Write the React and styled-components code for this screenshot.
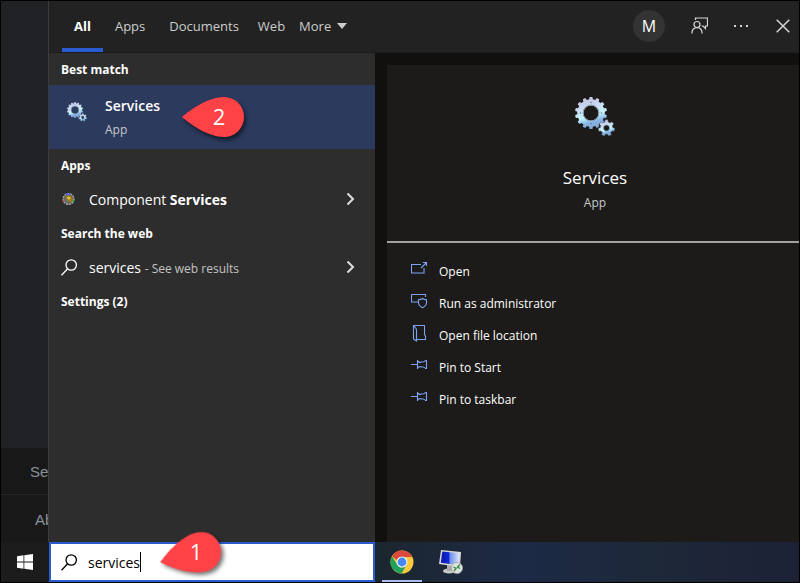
import React, { useState } from 'react';
import styled, { createGlobalStyle, css } from 'styled-components';

const GlobalStyle = createGlobalStyle`
  * {
    box-sizing: border-box;
  }
  body {
    margin: 0;
    background: #000;
    font-family: 'Open Sans', 'Noto Sans', sans-serif;
    color: #fff;
  }
  button, input {
    font: inherit;
    color: inherit;
  }
`;

const Desktop = styled.div`
  min-height: 100vh;
  padding: 1px;
  display: grid;
  grid-template-columns: 48px minmax(0, 1fr);
  grid-template-rows: 1fr 40px;
`;

const Backdrop = styled.aside`
  background: #202124;
  border-right: 1px solid #3c3c3c;
  display: flex;
  flex-direction: column;
  justify-content: flex-end;
  overflow: hidden;
`;

const BackdropLink = styled.a`
  display: flex;
  align-items: center;
  height: 47px;
  padding: 2px 0 0 ${props => props.$indent};
  background: #181818;
  border-bottom: 1px solid #252525;
  color: #8b919a;
  font: 15px/20px 'Liberation Sans', sans-serif;
  text-decoration: none;
  white-space: nowrap;
  &:last-child {
    border-bottom: none;
  }
`;

const SearchWindow = styled.main`
  display: flex;
  flex-direction: column;
  min-width: 0;
`;

const Header = styled.header`
  display: flex;
  justify-content: space-between;
  height: 52px;
  padding-left: 13px;
  background: #222;
  border-bottom: 1px solid #1c1c1c;
`;

const Tabs = styled.nav`
  display: flex;
`;

const Tab = styled.button`
  display: flex;
  align-items: center;
  gap: 6px;
  padding: 0 ${props => (props.$tight ? '7px' : '12px')} 2px;
  background: none;
  border: solid transparent;
  border-width: 4px 0;
  color: #ccc;
  font-size: 13px;
  ${props => props.$active && css`
    border-bottom-color: #2a5bd0;
    color: #fff;
    font-weight: 700;
  `}
`;

const Tools = styled.div`
  display: flex;
  align-items: center;
  gap: 10px;
  padding-bottom: 2px;
`;

const ToolButton = styled.button`
  display: grid;
  place-items: center;
  width: 32px;
  height: 32px;
  padding: 0;
  background: none;
  border: none;
  color: #d6d6d6;
`;

const Avatar = styled.button`
  width: 32px;
  height: 32px;
  margin-right: 8px;
  padding: 0;
  border: none;
  border-radius: 50%;
  background: #333;
  font-size: 16px;
`;

const Body = styled.div`
  flex: 1;
  display: grid;
  grid-template-columns: 326px minmax(0, 1fr);
`;

const Results = styled.section`
  background: #2d2d2d;
`;

const GroupTitle = styled.h2`
  height: 32px;
  margin: 0;
  padding-left: 12px;
  font-size: 12px;
  line-height: 34px;
  font-weight: 700;
`;

const BestMatch = styled.div`
  position: relative;
  background: #2c3a5e;
`;

const BestMatchButton = styled.button`
  display: flex;
  align-items: flex-start;
  gap: 18px;
  width: 100%;
  height: 64px;
  padding: 9px 18px;
  background: none;
  border: none;
  text-align: left;
  svg {
    margin-top: 8px;
  }
`;

const ResultName = styled.span`
  display: block;
  font-size: 14px;
  line-height: 24px;
  font-weight: 600;
`;

const Kind = styled.span`
  display: block;
  font-size: 12px;
  line-height: 24px;
  color: #c6c8cc;
`;

const ResultRow = styled.button`
  display: flex;
  align-items: center;
  gap: 12px;
  width: 100%;
  height: 36px;
  padding: 0 20px 0 12px;
  background: none;
  border: none;
  font-size: 14px;
  text-align: left;
  small {
    font-size: 12px;
    color: #c4c4c4;
  }
  b {
    font-weight: 700;
  }
`;

const RowLabel = styled.span`
  flex: 1;
`;

const Preview = styled.section`
  display: flex;
  padding: 12px 0 0 12px;
  background: #11100e;
`;

const PreviewCard = styled.div`
  flex: 1;
  background: #1c1b19;
`;

const Hero = styled.div`
  display: flex;
  flex-direction: column;
  align-items: center;
  height: 178px;
  padding: 32px 0 0 4px;
  border-bottom: 2px solid #a3a19f;
`;

const HeroTitle = styled.h1`
  margin: 28px 0 0;
  font-size: 17px;
  line-height: 26px;
  font-weight: 400;
`;

const Actions = styled.ul`
  margin: 0;
  padding: 12px 0 0 24px;
  list-style: none;
`;

const ActionButton = styled.button`
  display: flex;
  align-items: center;
  gap: 11px;
  height: 32px;
  padding: 0;
  background: none;
  border: none;
  font-size: 12px;
  svg {
    color: #7ba2f7;
    margin-bottom: 4px;
  }
`;

const Taskbar = styled.footer`
  grid-column: 1 / -1;
  display: flex;
  background: linear-gradient(90deg, #1c1c1c 48px, #1c262e 374px, #1c2a46 520px, #1d2838 650px, #1c2136 100%);
`;

const StartButton = styled.button`
  display: grid;
  place-items: center;
  width: 48px;
  padding: 0;
  background: none;
  border: none;
`;

const SearchBox = styled.label`
  position: relative;
  display: flex;
  align-items: center;
  width: 326px;
  padding-left: 10px;
  border: 2px solid #2a5bd0;
  background: #fff;
  color: #000;
`;

const SearchInput = styled.input`
  field-sizing: content;
  margin-left: 11px;
  padding: 0;
  border: none;
  outline: none;
  background: none;
  font-size: 14px;
  caret-color: transparent;
`;

const Caret = styled.span`
  width: 1px;
  height: 20px;
  background: #000;
`;

const TaskButton = styled.button`
  display: grid;
  place-items: center;
  width: 40px;
  margin-left: ${props => (props.$open ? '7px' : '9px')};
  padding: 0;
  background: none;
  border: solid transparent;
  border-width: 2px 0;
  border-bottom-color: ${props => (props.$open ? '#a9bdf5' : 'transparent')};
`;

const Marker = styled.span`
  position: absolute;
  left: ${props => props.$left};
  top: ${props => props.$top};
  width: 64px;
  height: 44px;
  pointer-events: none;
  svg {
    position: absolute;
    inset: 0;
    overflow: visible;
    filter: drop-shadow(2px 3px 2px rgba(0, 0, 0, 0.55));
    transform: rotate(${props => props.$tilt || 0}deg);
    transform-origin: 42px 20px;
  }
`;

const MarkerNumber = styled.span`
  position: absolute;
  left: 21px;
  top: 0;
  width: 32px;
  color: #fff;
  font-size: 22px;
  line-height: 38px;
  text-align: center;
`;

function gearPath(cx, cy, outer, root, hole, teeth) {
  const points = [];
  const step = (Math.PI * 2) / teeth;
  for (let i = 0; i < teeth; i++) {
    const a = i * step - Math.PI / 2;
    [[-0.3, root], [-0.2, outer], [0.2, outer], [0.3, root]].forEach(([t, r]) => {
      points.push(`${(cx + r * Math.cos(a + t * step)).toFixed(2)} ${(cy + r * Math.sin(a + t * step)).toFixed(2)}`);
    });
  }
  return `M${points.join('L')}ZM${cx - hole} ${cy}a${hole} ${hole} 0 1 0 ${hole * 2} 0a${hole} ${hole} 0 1 0 ${-hole * 2} 0Z`;
}

function Gears({ size }) {
  const id = `gear-${size}`;
  return (
    <svg width={size} height={size} viewBox="0 0 40 40" aria-hidden="true">
      <defs>
        <linearGradient id={id} x1="0.3" y1="0" x2="0.6" y2="1">
          <stop offset="0.1" stopColor="#c3c9e6" />
          <stop offset="0.35" stopColor="#cbdcf3" />
          <stop offset="0.6" stopColor="#c4f5fd" />
          <stop offset="0.78" stopColor="#86b5e8" />
          <stop offset="1" stopColor="#7fa3cf" />
        </linearGradient>
      </defs>
      <path d={gearPath(16, 16, 16, 13.8, 7.5, 14)} fill={`url(#${id})`} fillRule="evenodd" />
      <circle cx="16" cy="16" r="8" fill="none" stroke="#8d9cab" strokeWidth="1" />
      <g fill="#5c7186">
        <circle cx="16" cy="5.5" r="0.7" />
        <circle cx="26.5" cy="16" r="0.7" />
        <circle cx="16" cy="26.5" r="0.7" />
        <circle cx="5.5" cy="16" r="0.7" />
      </g>
      <path d={gearPath(31.5, 31, 8.3, 6.3, 2.8, 7)} fill={`url(#${id})`} fillRule="evenodd" stroke="#47525f" strokeWidth="0.5" />
    </svg>
  );
}

function ComponentIcon() {
  return (
    <svg width="16" height="16" viewBox="0 0 16 16" aria-hidden="true">
      <circle cx="7.5" cy="8" r="5.500" fill="#686b70" stroke="#a5a8ab" strokeWidth="1.2" strokeDasharray="2 1" />
      <path d="M4 6l4-2 4 3-1 4-4 0z" fill="#96771c" />
      <path d="M7 5l3 2-2 2-2-2z" fill="#e3c33a" />
      <path d="M5 2h2v2H5zM8 2h1v2H8z" fill="#4d55e8" />
      <path d="M11 9h2v2h-2z" fill="#35a447" />
      <path d="M2 9h1v2H2z" fill="#d84b4b" />
    </svg>
  );
}

function SearchIcon() {
  return (
    <svg width="16" height="17" viewBox="0 0 16 17" fill="none" stroke="currentColor" strokeWidth="1.3" aria-hidden="true">
      <circle cx="10.2" cy="6" r="5.2" />
      <path d="M6.600 9.800L.5 16.200" />
    </svg>
  );
}

function Chevron() {
  return (
    <svg width="9" height="14" viewBox="0 0 9 14" fill="none" stroke="#dcdcdc" strokeWidth="2" aria-hidden="true">
      <path d="M1.500 1.500L7 7l-5.500 5.500" />
    </svg>
  );
}

const ACTION_PATHS = {
  open: 'M10 3.500H.5v8.500h12.500V7M10 7L15 2M12 1.500h3.500V5',
  admin: 'M14.500 4V1.500H.5v7.500H7M11.500 5.500c-1.200 1-2.500 1.200-4 1.300v2.700c0 2.300 1.400 4 4 5.200 2.600-1.200 4-2.900 4-5.200V6.800c-1.500-.1-2.800-.3-4-1.300z',
  folder: 'M2.500.5h11v9l1 1.500v3.500H6M2.500.5v13.500l3 2v-11c0-1-.5-1.700-1.200-2.300z',
  pin: 'M0 7.500h6M6.500 3v9M6.500 4c1.500 1.500 3 1.500 4 1h1.500c1.300 0 2-.8 2.500-1.500h1v8h-1c-.5-.8-1.200-1.500-2.500-1.500h-1.500c-1-.5-2.500-.5-4 1',
};

function ActionIcon({ name }) {
  return (
    <svg width="17" height="17" viewBox="0 0 17 17" fill="none" stroke="currentColor" strokeWidth="1.1" aria-hidden="true">
      <path d={ACTION_PATHS[name]} />
    </svg>
  );
}

function Callout({ number, ...place }) {
  return (
    <Marker {...place}>
      <svg width="64" height="44" viewBox="0 0 64 44" aria-hidden="true">
        <path d="M0 20C8 13 26 0 42 0a20 20 0 0 1 0 40C26 40 8 27 0 20z" fill="#ff4245" />
      </svg>
      <MarkerNumber>{number}</MarkerNumber>
    </Marker>
  );
}

function ChromeIcon() {
  return (
    <svg width="24" height="24" viewBox="0 0 24 24" aria-hidden="true">
      <circle cx="12" cy="12" r="11.500" fill="#fbc93d" />
      <path d="M2 6.300A11.500 11.500 0 0 1 22.300 7H12a5.500 5.500 0 0 0-5 3.200L2 6.300z" fill="#dc4a3d" />
      <path d="M2 6.300A11.500 11.500 0 0 0 11.500 23.500l5-8.500a5.500 5.500 0 0 1-9.300-.3z" fill="#1fa25c" />
      <circle cx="12" cy="12" r="5.500" fill="#eef3fb" />
      <circle cx="12" cy="12" r="4.400" fill="#4587f3" />
    </svg>
  );
}

function RemoteIcon() {
  return (
    <svg width="24" height="24" viewBox="0 0 24 24" aria-hidden="true">
      <defs>
        <linearGradient id="screen">
          <stop offset="0" stopColor="#0a18b5" />
          <stop offset="0.42" stopColor="#1028cf" />
          <stop offset="0.5" stopColor="#6f8eea" />
          <stop offset="1" stopColor="#dce6fb" />
        </linearGradient>
      </defs>
      <ellipse cx="10" cy="21" rx="6" ry="2.500" fill="#cbcbcb" />
      <path d="M8 15h6v6H8z" fill="#a9a9a9" />
      <path d="M2 0l20 2-1 15L0 14z" fill="#d9d9d2" />
      <path d="M3.300 1.500L20.500 3.200l-.8 12L1.800 12.700z" fill="url(#screen)" />
      <circle cx="18" cy="18" r="5.600" fill="#dfe3df" stroke="#9ca09c" strokeWidth="0.7" />
      <path d="M14.500 17l2.500 1.500-2 2.500M21 14.500l-2.500 2.500 2.500 1.500" fill="none" stroke="#2c8b3c" strokeWidth="1.400" />
    </svg>
  );
}

const actions = [
  { icon: 'open', label: 'Open' },
  { icon: 'admin', label: 'Run as administrator' },
  { icon: 'folder', label: 'Open file location' },
  { icon: 'pin', label: 'Pin to Start' },
  { icon: 'pin', label: 'Pin to taskbar' },
];

function App() {
  const [query, setQuery] = useState('services');

  return (
    <>
      <GlobalStyle />
      <Desktop>
        <Backdrop>
          <BackdropLink href="#se" $indent="29px">Se</BackdropLink>
          <BackdropLink href="#ab" $indent="34px">Ab</BackdropLink>
        </Backdrop>
        <SearchWindow>
          <Header>
            <Tabs>
              <Tab $active>All</Tab>
              <Tab>Apps</Tab>
              <Tab>Documents</Tab>
              <Tab $tight>Web</Tab>
              <Tab $tight>
                More
                <svg width="10" height="6" viewBox="0 0 10 6" fill="currentColor" aria-hidden="true"><path d="M0 0h10L5 6z" /></svg>
              </Tab>
            </Tabs>
            <Tools>
              <Avatar>M</Avatar>
              <ToolButton aria-label="Feedback">
                <svg width="17" height="17" viewBox="0 0 17 17" fill="none" stroke="currentColor" strokeWidth="1.200" aria-hidden="true">
                  <path d="M4.500 3V1h12v8h-2v2.500L12 9h-1.500" />
                  <circle cx="6" cy="7.500" r="3" />
                  <path d="M.8 16.500c.2-3.500 2-5.800 5.200-5.800s5 2.300 5.200 5.800" />
                </svg>
              </ToolButton>
              <ToolButton aria-label="Options">
                <svg width="16" height="4" viewBox="0 0 16 4" fill="currentColor" aria-hidden="true">
                  <path d="M1 1h2v2H1zM7 1h2v2H7zM13 1h2v2h-2z" />
                </svg>
              </ToolButton>
              <ToolButton aria-label="Close">
                <svg width="14" height="14" viewBox="0 0 14 14" stroke="currentColor" strokeWidth="1.500" aria-hidden="true">
                  <path d="M.7.700l12.600 12.600M13.300.700L.7 13.300" />
                </svg>
              </ToolButton>
            </Tools>
          </Header>
          <Body>
            <Results>
              <GroupTitle>Best match</GroupTitle>
              <BestMatch>
                <BestMatchButton>
                  <Gears size={20} />
                  <span>
                    <ResultName>Services</ResultName>
                    <Kind>App</Kind>
                  </span>
                </BestMatchButton>
                <Callout number="2" $left="133px" $top="12px" />
              </BestMatch>
              <GroupTitle>Apps</GroupTitle>
              <ResultRow>
                <ComponentIcon />
                <RowLabel>Component <b>Services</b></RowLabel>
                <Chevron />
              </ResultRow>
              <GroupTitle>Search the web</GroupTitle>
              <ResultRow>
                <SearchIcon />
                <RowLabel>services <small>- See web results</small></RowLabel>
                <Chevron />
              </ResultRow>
              <GroupTitle>Settings (2)</GroupTitle>
            </Results>
            <Preview>
              <PreviewCard>
                <Hero>
                  <Gears size={40} />
                  <HeroTitle>Services</HeroTitle>
                  <Kind>App</Kind>
                </Hero>
                <Actions>
                  {actions.map(action => (
                    <li key={action.label}>
                      <ActionButton>
                        <ActionIcon name={action.icon} />
                        {action.label}
                      </ActionButton>
                    </li>
                  ))}
                </Actions>
              </PreviewCard>
            </Preview>
          </Body>
        </SearchWindow>
        <Taskbar>
          <StartButton aria-label="Start">
            <svg width="16" height="16" viewBox="0 0 16 16" fill="#fff" aria-hidden="true">
              <path d="M0 2.200l6.500-.9v6.200H0zM7.300 1.200L16 0v7.500H7.300zM0 8.400h6.500v6.300L0 13.800zM7.300 8.400H16V16l-8.700-1.200z" />
            </svg>
          </StartButton>
          <SearchBox>
            <SearchIcon />
            <SearchInput
              type="text"
              aria-label="Search"
              value={query}
              onChange={e => setQuery(e.target.value)}
            />
            <Caret />
            <Callout number="1" $left="108px" $top="-12px" $tilt={-14} />
          </SearchBox>
          <TaskButton $open aria-label="Chrome"><ChromeIcon /></TaskButton>
          <TaskButton aria-label="Remote desktop"><RemoteIcon /></TaskButton>
        </Taskbar>
      </Desktop>
    </>
  );
}

export default App;
